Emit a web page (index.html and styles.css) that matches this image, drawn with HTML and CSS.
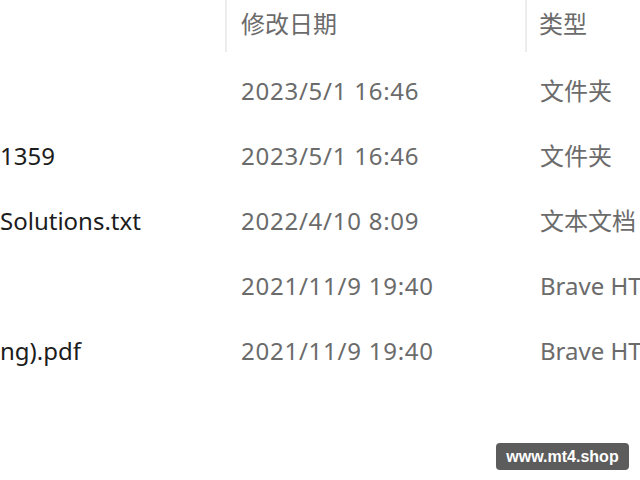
FILE: index.html
```html
<!DOCTYPE html>
<html lang="zh-CN">
<head>
<meta charset="utf-8">
<title>文件列表</title>
<link rel="stylesheet" href="styles.css">
</head>
<body>
<div class="view">
  <div class="header">
    <div class="cell name"></div>
    <div class="cell date sep">修改日期</div>
    <div class="cell type sep">类型</div>
  </div>
  <div class="rows">
    <div class="row">
      <div class="cell name"></div>
      <div class="cell date">2023/5/1 16:46</div>
      <div class="cell type">文件夹</div>
    </div>
    <div class="row">
      <div class="cell name">1359</div>
      <div class="cell date">2023/5/1 16:46</div>
      <div class="cell type">文件夹</div>
    </div>
    <div class="row">
      <div class="cell name">Solutions.txt</div>
      <div class="cell date">2022/4/10 8:09</div>
      <div class="cell type">文本文档</div>
    </div>
    <div class="row">
      <div class="cell name"></div>
      <div class="cell date">2021/11/9 19:40</div>
      <div class="cell type">Brave HTML Document</div>
    </div>
    <div class="row">
      <div class="cell name">ng).pdf</div>
      <div class="cell date">2021/11/9 19:40</div>
      <div class="cell type">Brave HTML Document</div>
    </div>
  </div>
</div>
<div class="watermark">www.mt4.shop</div>
</body>
</html>
```
FILE: styles.css
```css
html, body {
  margin: 0;
  padding: 0;
  background: #ffffff;
  width: 640px;
  height: 480px;
  overflow: hidden;
}

body {
  font-family: "Noto Sans", "Noto Sans CJK SC", sans-serif;
  font-size: 24px;
  position: relative;
}

.view {
  width: 640px;
  overflow: hidden;
}

.header,
.row {
  display: flex;
  white-space: nowrap;
}

.header {
  height: 52px;
  line-height: 48px;
  color: #555a60;
}

.rows {
  padding-top: 6px;
}

.row {
  height: 65px;
  line-height: 65px;
}

.cell {
  overflow: hidden;
  flex: none;
}

.cell.name {
  width: 225px;
  color: #1c1c1c;
}

.cell.date {
  width: 286px;
  padding-left: 16px;
  color: #6b6b6b;
  letter-spacing: 0.75px;
}

.header .cell.date {
  letter-spacing: 0;
}

.cell.type {
  flex: 1 1 auto;
  padding-left: 13px;
  color: #6b6b6b;
}

.row .cell.date {
  width: 286px;
}

.header .sep {
  border-left: 2px solid #ececec;
}

.header .cell.date {
  width: 284px;
  padding-left: 14px;
}

.header .cell.type {
  padding-left: 12px;
}

.watermark {
  position: absolute;
  left: 496px;
  top: 443px;
  width: 133px;
  height: 27px;
  line-height: 27px;
  background: #5c5c5c;
  border-radius: 4px;
  color: #ffffff;
  font-family: "Liberation Sans", Arial, sans-serif;
  font-weight: bold;
  font-size: 16px;
  text-align: center;
}
```
